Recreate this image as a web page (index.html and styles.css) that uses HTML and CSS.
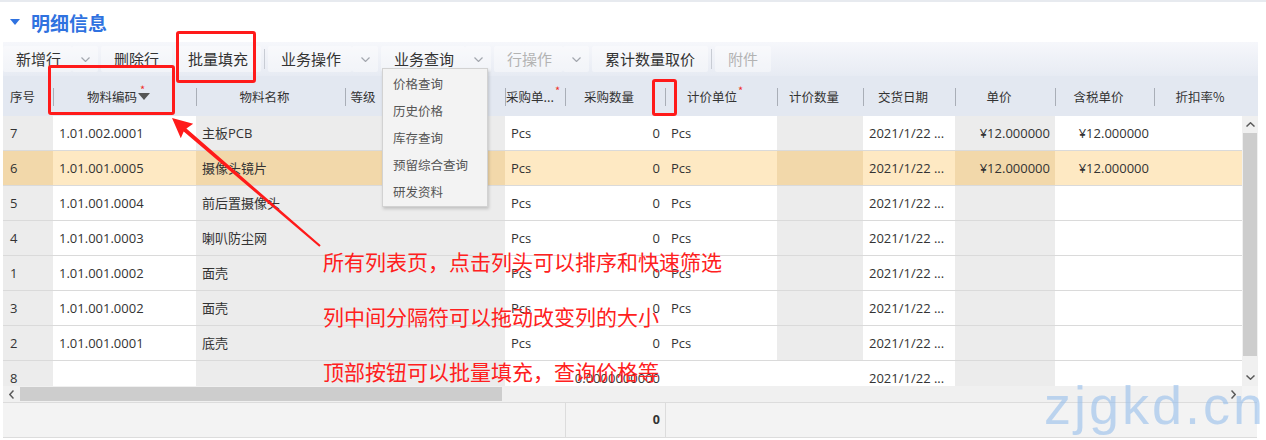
FILE: index.html
```html
<!DOCTYPE html>
<html lang="zh-CN">
<head>
    <meta charset="UTF-8">
    <title>明细信息</title>
    <link rel="stylesheet" href="styles.css">
</head>
<body>
<div class="page">
    <div class="topline"></div>
    <h2 class="section-title"><span class="caret"></span>明细信息</h2>

    <div class="grid">
        <div class="toolbar">
            <div class="split">
                <button class="btn main">新增行</button>
                <button class="btn drop"><svg class="chev" width="9" height="5" viewBox="0 0 9 5"><polyline points="0.5,0.5 4.5,4.5 8.5,0.5"/></svg></button>
            </div>
            <button class="btn">删除行</button>
            <button class="btn">批量填充</button>
            <span class="tb-sep"></span>
            <div class="split">
                <button class="btn main">业务操作</button>
                <button class="btn drop"><svg class="chev" width="9" height="5" viewBox="0 0 9 5"><polyline points="0.5,0.5 4.5,4.5 8.5,0.5"/></svg></button>
            </div>
            <div class="split">
                <button class="btn main">业务查询</button>
                <button class="btn drop"><svg class="chev" width="9" height="5" viewBox="0 0 9 5"><polyline points="0.5,0.5 4.5,4.5 8.5,0.5"/></svg></button>
            </div>
            <div class="split">
                <button class="btn main disabled">行操作</button>
                <button class="btn drop"><svg class="chev" width="9" height="5" viewBox="0 0 9 5"><polyline points="0.5,0.5 4.5,4.5 8.5,0.5"/></svg></button>
            </div>
            <button class="btn">累计数量取价</button>
            <span class="tb-sep"></span>
            <button class="btn disabled">附件</button>
        </div>

        <div class="thead">
            <div class="th left">序号</div>
            <div class="th">物料编码<span class="sort-wrap"><span class="req">*</span><span class="sort"></span></span></div>
            <div class="th">物料名称</div>
            <div class="th">等级</div>
            <div class="th">批号</div>
            <div class="th left">采购单...<span class="req">*</span></div>
            <div class="th">采购数量</div>
            <div class="th">计价单位<span class="req">*</span></div>
            <div class="th">计价数量</div>
            <div class="th">交货日期</div>
            <div class="th">单价</div>
            <div class="th">含税单价</div>
            <div class="th">折扣率%</div>
        </div>

        <div class="tbody-wrap">
            <div class="tbody">
                <div class="row">
                    <div class="cell g">7</div>
                    <div class="cell">1.01.002.0001</div>
                    <div class="cell g">主板PCB</div>
                    <div class="cell g"></div>
                    <div class="cell g"></div>
                    <div class="cell">Pcs</div>
                    <div class="cell num">0</div>
                    <div class="cell">Pcs</div>
                    <div class="cell g"></div>
                    <div class="cell">2021/1/22 ...</div>
                    <div class="cell g num">¥12.000000</div>
                    <div class="cell num">¥12.000000</div>
                    <div class="cell"></div>
                </div>
                <div class="row sel">
                    <div class="cell g">6</div>
                    <div class="cell">1.01.001.0005</div>
                    <div class="cell g">摄像头镜片</div>
                    <div class="cell g"></div>
                    <div class="cell g"></div>
                    <div class="cell">Pcs</div>
                    <div class="cell num">0</div>
                    <div class="cell">Pcs</div>
                    <div class="cell g"></div>
                    <div class="cell">2021/1/22 ...</div>
                    <div class="cell g num">¥12.000000</div>
                    <div class="cell num">¥12.000000</div>
                    <div class="cell"></div>
                </div>
                <div class="row">
                    <div class="cell g">5</div>
                    <div class="cell">1.01.001.0004</div>
                    <div class="cell g">前后置摄像头</div>
                    <div class="cell g"></div>
                    <div class="cell g"></div>
                    <div class="cell">Pcs</div>
                    <div class="cell num">0</div>
                    <div class="cell">Pcs</div>
                    <div class="cell g"></div>
                    <div class="cell">2021/1/22 ...</div>
                    <div class="cell g"></div>
                    <div class="cell"></div>
                    <div class="cell"></div>
                </div>
                <div class="row">
                    <div class="cell g">4</div>
                    <div class="cell">1.01.001.0003</div>
                    <div class="cell g">喇叭防尘网</div>
                    <div class="cell g"></div>
                    <div class="cell g"></div>
                    <div class="cell">Pcs</div>
                    <div class="cell num">0</div>
                    <div class="cell">Pcs</div>
                    <div class="cell g"></div>
                    <div class="cell">2021/1/22 ...</div>
                    <div class="cell g"></div>
                    <div class="cell"></div>
                    <div class="cell"></div>
                </div>
                <div class="row">
                    <div class="cell g">1</div>
                    <div class="cell">1.01.001.0002</div>
                    <div class="cell g">面壳</div>
                    <div class="cell g"></div>
                    <div class="cell g"></div>
                    <div class="cell">Pcs</div>
                    <div class="cell num">0</div>
                    <div class="cell">Pcs</div>
                    <div class="cell g"></div>
                    <div class="cell">2021/1/22 ...</div>
                    <div class="cell g"></div>
                    <div class="cell"></div>
                    <div class="cell"></div>
                </div>
                <div class="row">
                    <div class="cell g">3</div>
                    <div class="cell">1.01.001.0002</div>
                    <div class="cell g">面壳</div>
                    <div class="cell g"></div>
                    <div class="cell g"></div>
                    <div class="cell">Pcs</div>
                    <div class="cell num">0</div>
                    <div class="cell">Pcs</div>
                    <div class="cell g"></div>
                    <div class="cell">2021/1/22 ...</div>
                    <div class="cell g"></div>
                    <div class="cell"></div>
                    <div class="cell"></div>
                </div>
                <div class="row">
                    <div class="cell g">2</div>
                    <div class="cell">1.01.001.0001</div>
                    <div class="cell g">底壳</div>
                    <div class="cell g"></div>
                    <div class="cell g"></div>
                    <div class="cell">Pcs</div>
                    <div class="cell num">0</div>
                    <div class="cell">Pcs</div>
                    <div class="cell g"></div>
                    <div class="cell">2021/1/22 ...</div>
                    <div class="cell g"></div>
                    <div class="cell"></div>
                    <div class="cell"></div>
                </div>
                <div class="row">
                    <div class="cell g">8</div>
                    <div class="cell"></div>
                    <div class="cell g"></div>
                    <div class="cell g"></div>
                    <div class="cell g"></div>
                    <div class="cell"></div>
                    <div class="cell num">0.0000000000</div>
                    <div class="cell"></div>
                    <div class="cell"></div>
                    <div class="cell">2021/1/22 ...</div>
                    <div class="cell g"></div>
                    <div class="cell"></div>
                    <div class="cell"></div>
                </div>
            </div>
            <div class="vscroll">
                <div class="sb-arrow"><svg width="9" height="5" viewBox="0 0 9 5"><polyline points="0.5,4.5 4.5,0.8 8.5,4.5"/></svg></div>
                <div class="sb-thumb"></div>
                <div class="sb-fill"></div>
                <div class="sb-arrow"><svg width="9" height="5" viewBox="0 0 9 5"><polyline points="0.5,0.5 4.5,4.2 8.5,0.5"/></svg></div>
            </div>
        </div>

        <div class="hscroll-row">
            <div class="hscroll">
                <div class="sb-arrow"><svg width="5" height="9" viewBox="0 0 5 9"><polyline points="4.5,0.5 0.8,4.5 4.5,8.5"/></svg></div>
                <div class="sb-thumb"></div>
                <div class="sb-fill"></div>
                <div class="sb-arrow"><svg width="5" height="9" viewBox="0 0 5 9"><polyline points="0.5,0.5 4.2,4.5 0.5,8.5"/></svg></div>
            </div>
            <div class="sb-corner"></div>
        </div>

        <div class="tfoot">
            <div class="fcell"></div>
            <div class="fcell total">0</div>
            <div class="fcell"></div>
        </div>
    </div>

    <!-- 下拉菜单 -->
    <div class="menu">
        <div class="menu-item">价格查询</div>
        <div class="menu-item">历史价格</div>
        <div class="menu-item">库存查询</div>
        <div class="menu-item">预留综合查询</div>
        <div class="menu-item">研发资料</div>
    </div>

    <!-- 标注 -->
    <div class="mark mark-fill"></div>
    <div class="mark mark-code"></div>
    <div class="mark mark-sep"></div>
    <svg class="arrow" width="1266" height="440" viewBox="0 0 1266 440">
        <polygon points="172,118 193.2,123.8 186.4,128.4 320.7,245.3 319.3,246.8 183.7,131.6 180.8,138.2"/>
    </svg>
    <div class="notes">
        <div>所有列表页，点击列头可以排序和快速筛选</div>
        <div>列中间分隔符可以拖动改变列的大小</div>
        <div>顶部按钮可以批量填充，查询价格等</div>
    </div>

    <div class="watermark">zjgkd.cn</div>
</div>
</body>
</html>
```

FILE: styles.css
```css
body {
    margin: 0;
    font-family: "Open Sans", "Noto Sans CJK SC", sans-serif;
    color: #333;
    background: #fff;
}

.page {
    position: relative;
    width: 1266px;
    height: 440px;
    overflow: hidden;
}

.topline {
    height: 2px;
    background: #e7eaef;
}

.section-title {
    display: flex;
    align-items: center;
    height: 40px;
    margin: 0;
    padding-left: 10px;
    font-family: "Noto Sans CJK SC", sans-serif;
    font-size: 19px;
    font-weight: bold;
    color: #2f72e0;
}

.caret {
    width: 0;
    height: 0;
    margin-right: 11px;
    border-left: 5.5px solid transparent;
    border-right: 5.5px solid transparent;
    border-top: 6px solid #2f72e0;
}

.grid {
    width: 1255px;
    margin-left: 3px;
}

/* toolbar */
.toolbar {
    display: flex;
    align-items: center;
    gap: 3px;
    height: 34px;
    background: linear-gradient(#f6f7fb, #e7ebf3);
}

.split {
    display: flex;
}

.btn {
    height: 26px;
    padding: 0 13px;
    border: none;
    border-radius: 2px;
    background: rgba(255, 255, 255, 0.4);
    font-family: "Noto Sans CJK SC", sans-serif;
    font-size: 15px;
    color: #333;
    line-height: 26px;
}

.btn.main {
    padding-right: 11px;
}

.btn.drop {
    display: flex;
    align-items: center;
    justify-content: center;
    width: 26px;
    padding: 0;
}

.btn.disabled {
    color: #b3b3b3;
}

.chev polyline {
    fill: none;
    stroke: #a3a7ae;
    stroke-width: 1.2;
}

.tb-sep {
    width: 1px;
    height: 20px;
    background: #c8ccd4;
}

/* header */
.thead,
.row {
    display: grid;
    grid-template-columns: 50px 143px 149px 48px 112px 60px 100px 112px 86px 92px 100px 99px 88px;
}

.thead {
    grid-template-columns: 50px 143px 149px 48px 112px 60px 100px 112px 86px 92px 100px 99px 104px;
    height: 40px;
    background: #e3e8f1;
    font-family: "Noto Sans CJK SC", sans-serif;
    font-size: 12.5px;
}

.th {
    position: relative;
    display: flex;
    align-items: center;
    justify-content: center;
    padding-right: 12px;
    white-space: nowrap;
}

.th + .th::before {
    content: "";
    position: absolute;
    left: 0;
    top: 12px;
    width: 1px;
    height: 18px;
    background: #a9aeb7;
}

.th.left {
    justify-content: flex-start;
    padding: 0 0 0 7px;
}

.th.left + .th.left,
.th:nth-child(6) {
    padding-left: 1px;
}

.req {
    position: relative;
    top: -6px;
    margin-left: 1px;
    font-size: 11px;
    color: #f0302a;
}

.sort-wrap {
    position: relative;
    display: inline-block;
    width: 12px;
    height: 7px;
    margin-left: 1px;
}

.sort-wrap .req {
    position: absolute;
    top: -12px;
    left: 2px;
    margin: 0;
}

.sort {
    position: absolute;
    left: 0;
    top: 0;
    border-left: 6px solid transparent;
    border-right: 6px solid transparent;
    border-top: 7px solid #555;
}

/* body */
.tbody-wrap {
    display: flex;
    height: 270px;
}

.tbody {
    width: 1239px;
    height: 270px;
    overflow: hidden;
    font-size: 13px;
}

.row {
    height: 34px;
    border-bottom: 1px solid #dadada;
}

.cell {
    padding: 0 6px;
    line-height: 34px;
    white-space: nowrap;
    overflow: hidden;
    background: #fff;
}

.cell:first-child {
    padding-left: 7px;
}

.cell.g {
    background: #ececec;
}

.cell.num {
    text-align: right;
    padding-right: 5px;
}

.row.sel .cell {
    background: #fee9c3;
}

.row.sel .cell.g {
    background: #f2d8aa;
}

/* scrollbars */
.vscroll {
    display: flex;
    flex-direction: column;
    width: 16px;
    background: #f0f0f0;
}

.vscroll .sb-arrow {
    height: 17px;
}

.vscroll .sb-thumb {
    height: 223px;
    margin: 0 1px;
    background: #cdcdcd;
}

.sb-fill {
    flex: 1;
}

.sb-arrow {
    display: flex;
    align-items: center;
    justify-content: center;
}

.sb-arrow polyline {
    fill: none;
    stroke: #5a5a5a;
    stroke-width: 1.5;
}

.hscroll-row {
    display: flex;
    height: 16px;
}

.hscroll {
    display: flex;
    width: 1239px;
    background: #f0f0f0;
}

.hscroll .sb-arrow {
    width: 17px;
}

.hscroll .sb-thumb {
    width: 482px;
    margin: 1px 0;
    background: #cdcdcd;
}

.sb-corner {
    width: 16px;
    background: #f4f4f4;
}

/* footer */
.tfoot {
    display: grid;
    grid-template-columns: 562px 100px 1fr;
    height: 34px;
    width: 1254px;
    border-top: 1px solid #dcdcdc;
    border-bottom: 1px solid #dcdcdc;
    background: #f3f3f3;
    font-size: 12.5px;
}

.fcell + .fcell {
    border-left: 1px solid #dcdcdc;
}

.fcell.total {
    text-align: right;
    padding-right: 5px;
    line-height: 34px;
    font-weight: bold;
}

/* dropdown menu */
.menu {
    position: absolute;
    left: 382px;
    top: 68px;
    width: 106px;
    height: 139px;
    padding-top: 1px;
    box-sizing: border-box;
    border: 1px solid #d2d2d2;
    background: #f3f3f3;
    box-shadow: 1px 2px 3px rgba(0, 0, 0, 0.18);
    font-family: "Noto Sans CJK SC", sans-serif;
    font-size: 12.5px;
    color: #555;
}

.menu-item {
    height: 27px;
    line-height: 27px;
    padding-left: 10px;
}

/* annotations */
.mark {
    position: absolute;
    box-sizing: border-box;
    border: 3px solid #ff1a1a;
    border-radius: 3px;
}

.mark-fill {
    left: 176px;
    top: 31px;
    width: 80px;
    height: 52px;
}

.mark-code {
    left: 48px;
    top: 65px;
    width: 127px;
    height: 50px;
}

.mark-sep {
    left: 652px;
    top: 79px;
    width: 25px;
    height: 37px;
}

.arrow {
    position: absolute;
    left: 0;
    top: 0;
}

.arrow polygon {
    fill: #ff1a1a;
}

.notes {
    position: absolute;
    left: 323px;
    top: 247px;
    display: flex;
    flex-direction: column;
    gap: 27px;
    font-family: "Noto Sans CJK SC", sans-serif;
    font-size: 21px;
    line-height: 28px;
    color: #ff2020;
    white-space: nowrap;
}

.watermark {
    position: absolute;
    left: 1044px;
    top: 378px;
    font-family: "Liberation Sans", sans-serif;
    font-size: 54px;
    line-height: 54px;
    letter-spacing: 3px;
    color: rgba(150, 190, 235, 0.6);
}
```
